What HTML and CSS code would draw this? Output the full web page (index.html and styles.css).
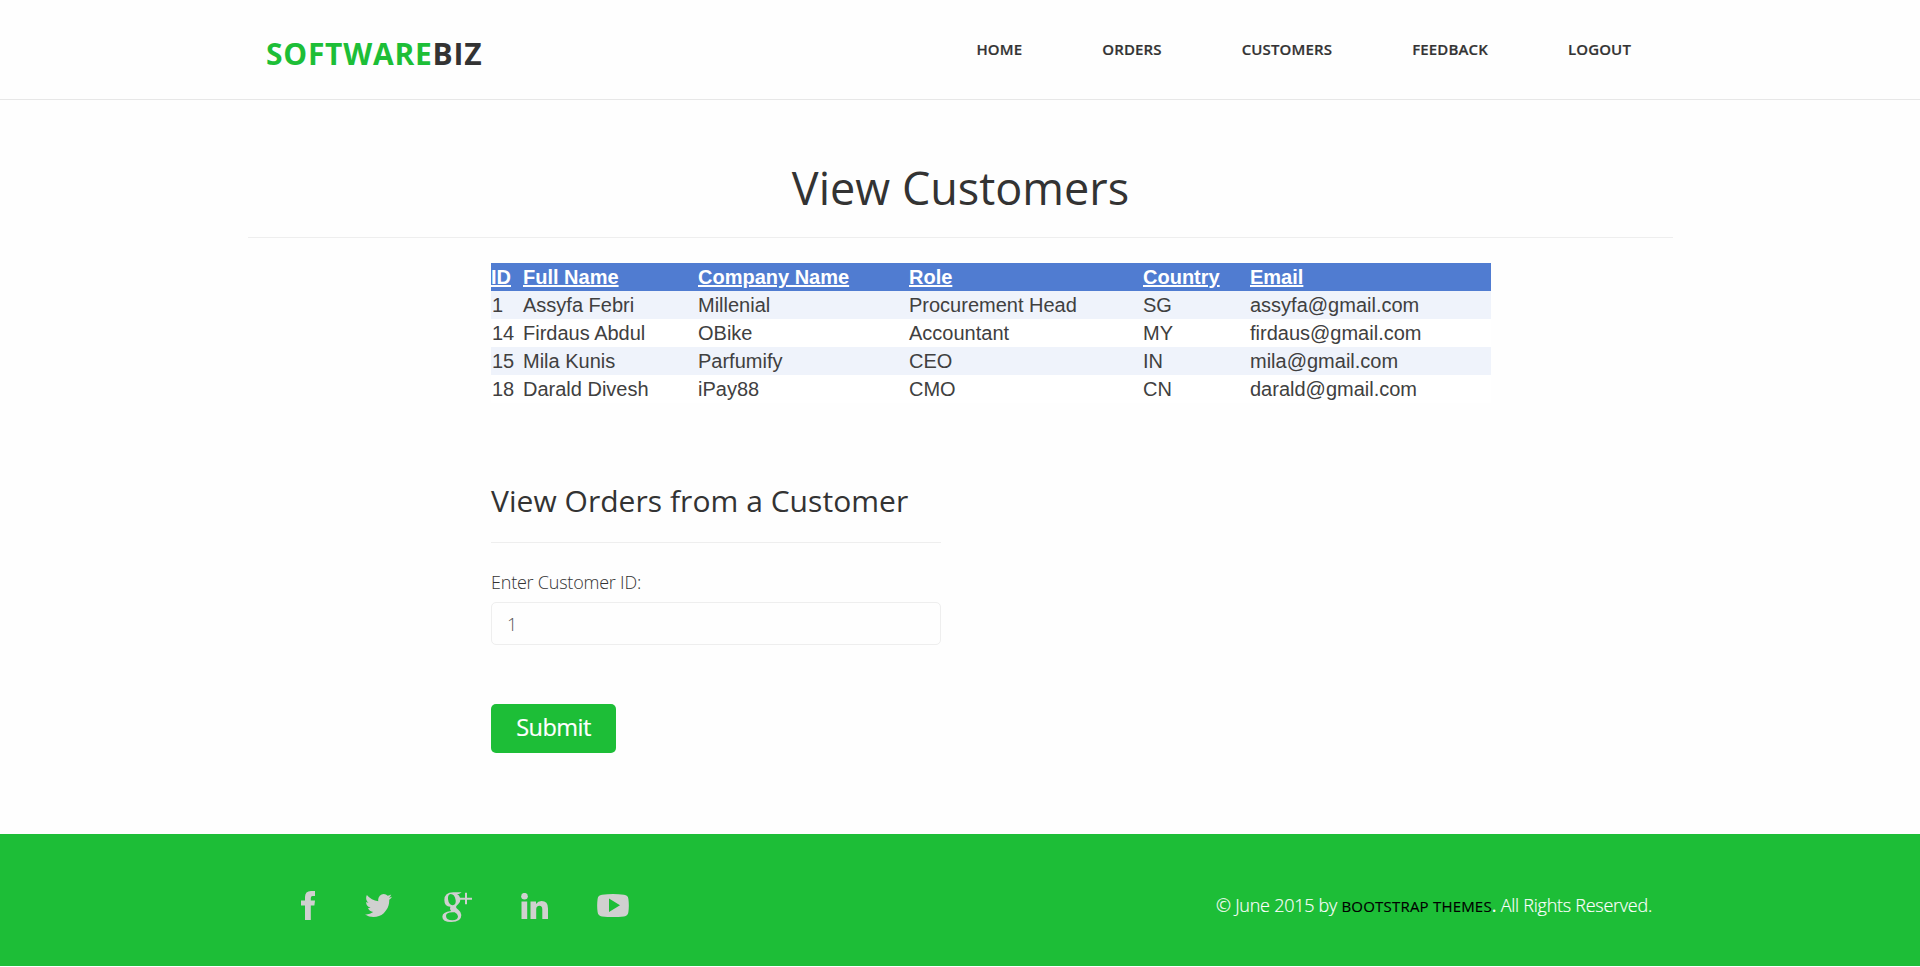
FILE: index.html
```html
<!DOCTYPE html>
<html lang="en">
<head>
<meta charset="utf-8">
<title>View Customers</title>
<link rel="stylesheet" href="styles.css">
</head>
<body>
<header class="header">
  <div class="bar">
    <a class="logo"><span class="accent">SOFTWARE</span>BIZ</a>
    <nav class="nav"><a>HOME</a><a>ORDERS</a><a>CUSTOMERS</a><a>FEEDBACK</a><a>LOGOUT</a></nav>
  </div>
</header>
<main class="main">
  <h1 class="title">View Customers</h1>
  <section class="content">
    <table class="grid">
      <colgroup><col class="c-id"><col class="c-name"><col class="c-company"><col class="c-role"><col class="c-country"><col class="c-email"></colgroup>
      <tr><th><a>ID</a></th><th><a>Full Name</a></th><th><a>Company Name</a></th><th><a>Role</a></th><th><a>Country</a></th><th><a>Email</a></th></tr>
      <tr class="alt"><td>1</td><td>Assyfa Febri</td><td>Millenial</td><td>Procurement Head</td><td>SG</td><td>assyfa@gmail.com</td></tr>
      <tr><td>14</td><td>Firdaus Abdul</td><td>OBike</td><td>Accountant</td><td>MY</td><td>firdaus@gmail.com</td></tr>
      <tr class="alt"><td>15</td><td>Mila Kunis</td><td>Parfumify</td><td>CEO</td><td>IN</td><td>mila@gmail.com</td></tr>
      <tr><td>18</td><td>Darald Divesh</td><td>iPay88</td><td>CMO</td><td>CN</td><td>darald@gmail.com</td></tr>
    </table>
    <form class="form">
      <h2 class="subtitle">View Orders from a Customer</h2>
      <label class="label" for="cid">Enter Customer ID:</label>
      <input class="input" id="cid" type="text" value="1">
      <button class="submit" type="button">Submit</button>
    </form>
  </section>
</main>
<footer class="footer">
  <div class="social">
    <svg class="fb" viewBox="0 0 14 29"><path d="M4 29V14.500H0V9.500H4V6Q4 0 10 0H14V5H11.500Q9.800 5 9.800 7V9.500H14L13.400 14.500H9.800V29Z"/></svg>
    <svg class="tw" viewBox="108 256 1576 1280" preserveAspectRatio="none"><path d="M1684 408q-67 98-162 167 1 14 1 42 0 130-38 259.500t-115.500 248.500-184.500 210.500-258 146-323 54.500q-271 0-496-145 35 4 78 4 225 0 401-138-105-2-188-64.500t-114-159.500q33 5 61 5 43 0 85-11-112-23-185.500-111.500t-73.500-205.500v-4q68 38 146 41-66-44-105-115t-39-154q0-88 44-163 121 149 294.500 238.500t371.500 99.500q-8-38-8-74 0-134 94.500-228.500t228.500-94.500q140 0 236 102 109-21 205-78-37 115-142 178 93-10 186-50z"/></svg>
    <svg class="gp" viewBox="486 215 90 90"><path fill-rule="evenodd" d="M545 216L537 221H531Q541 227 541 238Q541 246 535 251Q528 257 528 260Q528 263 535 268Q544 275 544 284Q544 305 514 305Q487 305 487 289Q487 275 513 272Q508 267 511 259Q493 259 493 239Q493 217 520 216ZM512 221Q503 223 504 236Q506 254 518 255Q529 254 527 240Q524 221 512 221ZM518 276Q498 276 498 287Q499 300 517 300Q534 300 534 288Q533 281 524 276Z"/><path d="M555 217H561V232H576V238H561V252H555V238H540V232H555Z"/></svg>
    <svg class="li" viewBox="0 0 27 26"><circle cx="3.500" cy="3.200" r="3.300"/><path d="M.5 8.500H6.200V26H.5ZM9.500 8.500H15V11Q17 8.100 20.500 8.100Q27 8.100 27 15.500V26H21.300V16.500Q21.300 12.800 18.500 12.800Q15.200 12.800 15.200 16.500V26H9.500Z"/></svg>
    <svg class="yt" viewBox="0 0 32 23"><path fill-rule="evenodd" d="M5 .7Q16-.5 27 .7Q31 1 31.400 5Q32.300 11.500 31.400 18Q31 22 27 22.400Q16 23.400 5 22.400Q1 22 .6 18Q-.3 11.500 .6 5Q1 1 5 .7ZM12 4.500V18L23 11.300Z"/></svg>
  </div>
  <p class="copy">© June 2015 by <a>BOOTSTRAP THEMES</a><b>.</b> All Rights Reserved.</p>
</footer>
</body>
</html>
```
FILE: styles.css
```css
* { box-sizing: border-box; }
body { margin: 0; background: #fefefe; color: #333; font-family: "Open Sans", sans-serif; }
.header { height: 100px; border-bottom: 1px solid #e7e7e7; }
.bar { width: 1425px; margin-left: 248px; padding: 0 42px 0 18px; display: flex; justify-content: space-between; white-space: nowrap; }
.logo { padding-top: 33px; font-size: 30px; line-height: 41px; font-weight: 700; letter-spacing: .75px; }
.accent { color: #1dbe37; }
.nav { display: flex; gap: 80px; padding-top: 39px; font-size: 15px; line-height: 20px; font-weight: 600; letter-spacing: .14px; -webkit-text-stroke: .2px #333; }
.main { height: 734px; }
.title { width: 1425px; height: 138px; margin: 0 0 0 248px; padding-top: 57px; border-bottom: 1px solid #eee; text-align: center; font-size: 45px; line-height: 62px; font-weight: 400; }
.content { width: 1000px; margin-left: 491px; padding-top: 25px; }
.grid { width: 1000px; table-layout: fixed; border-collapse: collapse; background: #fff; font: 20px/28px "Liberation Sans", Arial, sans-serif; }
.grid tr { height: 28px; }
.grid th, .grid td { padding: 0; text-align: left; white-space: nowrap; }
.grid td { color: #404040; }
.grid td:first-child { padding-left: 1px; }
.grid th { background: #507cd1; color: #fff; }
.grid th a { text-decoration: underline; }
.alt { background: #eff3fb; }
.c-id { width: 32px; }
.c-name { width: 175px; }
.c-company { width: 211px; }
.c-role { width: 234px; }
.c-country { width: 107px; }
.c-email { width: 241px; }
.form { width: 450px; display: flex; flex-direction: column; align-items: flex-start; }
.subtitle { width: 450px; height: 140px; margin: 0; padding-top: 77px; border-bottom: 1px solid #eee; font-size: 30px; line-height: 42px; font-weight: 400; letter-spacing: .04px; white-space: nowrap; }
.label { margin-top: 26px; font-size: 18px; line-height: 26px; font-weight: 300; letter-spacing: -.22px; }
.input { width: 450px; height: 43px; margin-top: 7px; padding: 0 15px; border: 1px solid #eee; border-radius: 5px; background: #fefefe; font: 300 18px/24px "Open Sans", sans-serif; color: #555; }
.submit { width: 125px; height: 49px; margin-top: 59px; padding: 0 0 2px; border: 0; border-radius: 5px; background: #1dbe37; color: #fff; font: 400 23.500px/47px "Open Sans", sans-serif; letter-spacing: -.5px; -webkit-text-stroke: .2px #fff; }
.footer { height: 132px; padding: 0 268px 0 301px; display: flex; justify-content: space-between; background: #1dbe37; }
.social { display: flex; align-items: flex-start; fill: #d0d0d0; }
.fb { width: 14px; height: 29px; margin-top: 57px; }
.tw { width: 27px; height: 23px; margin: 60px 0 0 50px; }
.gp { width: 30px; height: 30px; margin: 58px 0 0 50px; }
.li { width: 27px; height: 26px; margin: 59px 0 0 49px; }
.yt { width: 32px; height: 23px; margin: 60px 0 0 49px; }
.copy { margin: 58px 0 0; font-size: 18px; line-height: 26px; font-weight: 300; letter-spacing: -.26px; color: #fff; white-space: nowrap; -webkit-text-stroke: .15px #fff; }
.copy a { font-size: 15px; font-weight: 400; letter-spacing: .2px; color: #000; -webkit-text-stroke: .15px #000; }
.copy b { font-weight: 400; }
```
